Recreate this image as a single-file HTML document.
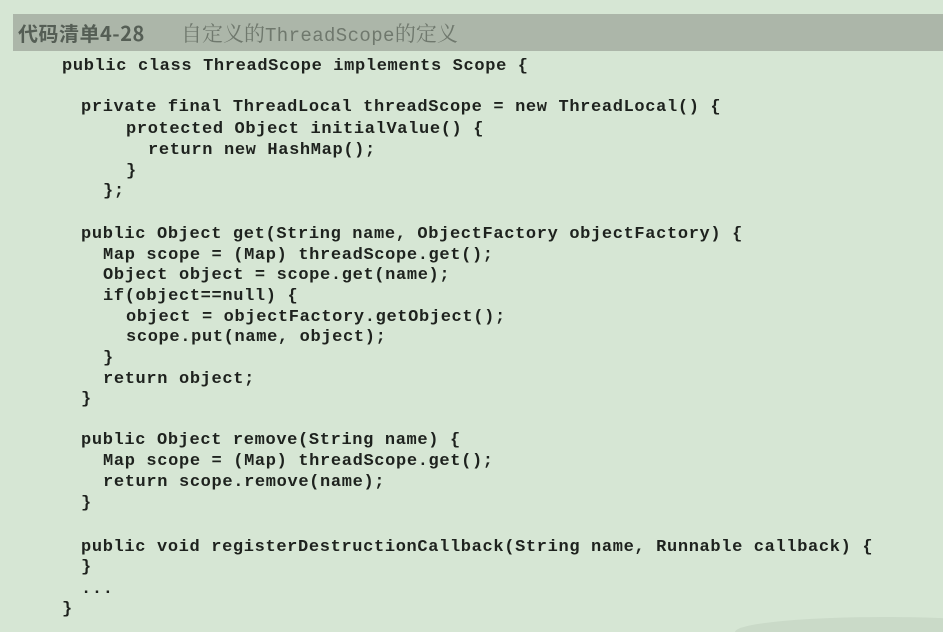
<!DOCTYPE html>
<html><head><meta charset="utf-8"><style>
html,body{margin:0;width:943px;height:632px;overflow:hidden}
body{background:#d6e6d4;position:relative}
.bar{position:absolute;left:13px;top:14px;width:930px;height:37px;background:#acb6a9}
.t{position:absolute;left:18px;top:18px;font:bold 20px "Noto Sans CJK SC","Liberation Sans",sans-serif;color:#555e55;white-space:nowrap;letter-spacing:0.5px}
.t2{position:absolute;left:181px;top:18px;font:21px "Noto Serif CJK SC",serif;color:#6f786d;white-space:nowrap}
.t2 span{font-family:"Liberation Mono",monospace;font-size:19px;letter-spacing:0.4px}
.l{position:absolute;height:20px;line-height:20px;font:bold 17px "Liberation Mono",monospace;letter-spacing:0.65px;color:#1e221e;white-space:pre}
.blob{position:absolute;left:735px;top:617px;width:300px;height:15px;border-radius:50% 50% 0 0/100% 100% 0 0;background:#cadac8}
</style></head><body>
<div class="bar"></div>
<div class="t">代码清单4-28</div>
<div class="t2">自定义的<span>ThreadScope</span>的定义</div>
<div class="blob"></div>
<div class="l" style="left:62px;top:57px">public class ThreadScope implements Scope {</div>
<div class="l" style="left:81px;top:98px">private final ThreadLocal threadScope = new ThreadLocal() {</div>
<div class="l" style="left:126px;top:120px">protected Object initialValue() {</div>
<div class="l" style="left:148px;top:141px">return new HashMap();</div>
<div class="l" style="left:126px;top:162px">}</div>
<div class="l" style="left:103px;top:182px">};</div>
<div class="l" style="left:81px;top:225px">public Object get(String name, ObjectFactory objectFactory) {</div>
<div class="l" style="left:103px;top:246px">Map scope = (Map) threadScope.get();</div>
<div class="l" style="left:103px;top:266px">Object object = scope.get(name);</div>
<div class="l" style="left:103px;top:287px">if(object==null) {</div>
<div class="l" style="left:126px;top:308px">object = objectFactory.getObject();</div>
<div class="l" style="left:126px;top:328px">scope.put(name, object);</div>
<div class="l" style="left:103px;top:349px">}</div>
<div class="l" style="left:103px;top:370px">return object;</div>
<div class="l" style="left:81px;top:390px">}</div>
<div class="l" style="left:81px;top:431px">public Object remove(String name) {</div>
<div class="l" style="left:103px;top:452px">Map scope = (Map) threadScope.get();</div>
<div class="l" style="left:103px;top:473px">return scope.remove(name);</div>
<div class="l" style="left:81px;top:494px">}</div>
<div class="l" style="left:81px;top:538px">public void registerDestructionCallback(String name, Runnable callback) {</div>
<div class="l" style="left:81px;top:558px">}</div>
<div class="l" style="left:81px;top:580px">...</div>
<div class="l" style="left:62px;top:600px">}</div>
</body></html>
